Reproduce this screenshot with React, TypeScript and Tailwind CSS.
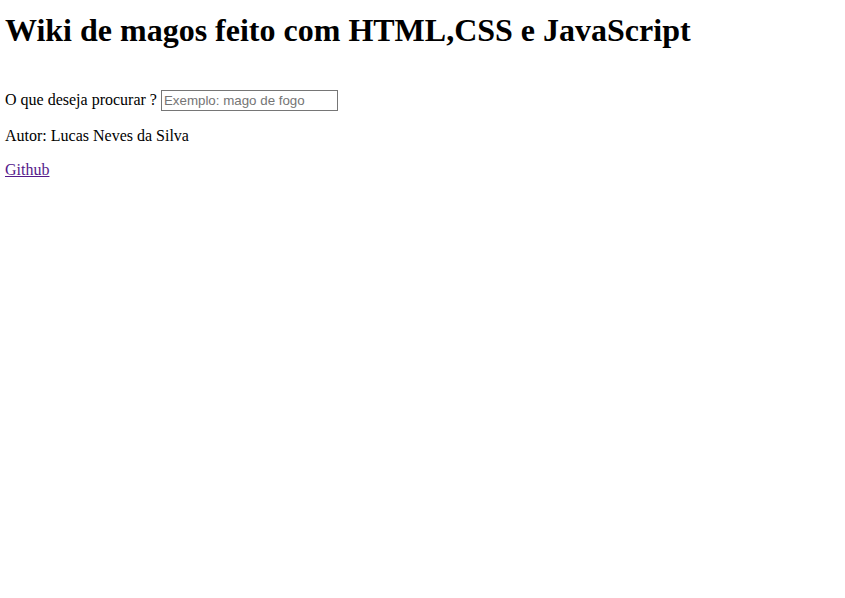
export default function App() {
  return (
    <div className="min-h-screen bg-white text-black font-['Liberation_Serif',serif] text-[16px] px-[5px] pt-[12px]">
      <h1 className="text-[32px] font-bold leading-[normal] m-0 mb-[41.44px]">
        Wiki de magos feito com HTML,CSS e JavaScript
      </h1>
      <p className="my-4 leading-[normal]">
        O que deseja procurar ?{" "}
        <input
          type="text"
          placeholder="Exemplo: mago de fogo"
          className="w-[177px] h-[21px] border border-[#767676] px-[2px] py-[1px] font-['Liberation_Sans',Arial,sans-serif] text-[13.33px] text-black placeholder:text-[#757575] outline-none align-baseline"
        />
      </p>
      <p className="my-4 leading-[normal]">Autor: Lucas Neves da Silva</p>
      <p className="my-4 leading-[normal]">
        <a href="#" className="text-[#551a8b] underline">
          Github
        </a>
      </p>
    </div>
  );
}
